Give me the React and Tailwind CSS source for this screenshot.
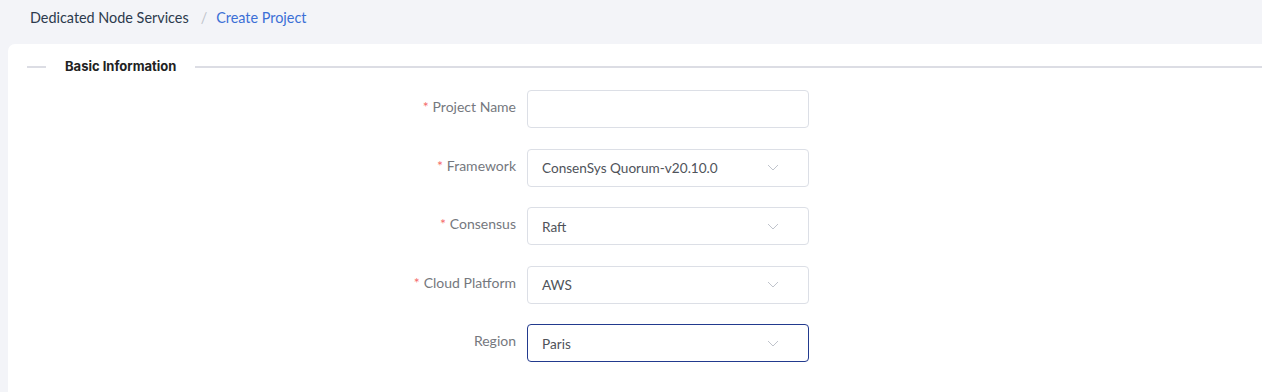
import React from "react";

const rows = [
  { label: "Project Name", req: true, value: null },
  { label: "Framework", req: true, value: "ConsenSys Quorum-v20.10.0" },
  { label: "Consensus", req: true, value: "Raft" },
  { label: "Cloud Platform", req: true, value: "AWS" },
  { label: "Region", req: false, value: "Paris", focus: true },
];

function Chevron() {
  return (
    <svg width="12" height="7" viewBox="0 0 12 7" className="mr-[29px]">
      <path d="M1 1 L6 6 L11 1" fill="none" stroke="#c0c4cc" strokeWidth="1" />
    </svg>
  );
}

export default function App() {
  return (
    <div
      className="w-[1262px] h-[392px] bg-[#f3f4f8] overflow-hidden"
      style={{ fontFamily: "Lato, 'Noto Sans', sans-serif" }}
    >
      <div className="h-[44px] flex items-start pt-[9px] pl-[30px] text-[14.4px] leading-[18px]">
        <span className="text-[#2c3a4d]">Dedicated Node Services</span>
        <span className="text-[#c0c4cc] ml-[12px] mr-[9px]">/</span>
        <span className="text-[#3b6fd6]">Create Project</span>
      </div>
      <div className="ml-[8px] bg-white rounded-tl-[7px] h-[348px] pt-[14px]">
        <div className="flex items-center h-[18px] pl-[19px]">
          <div className="w-[19px] h-[2px] bg-[#dcdde4]" />
          <span className="ml-[19px] mr-[19px] text-[13px] font-bold text-[#222] font-[Inter]">Basic Information</span>
          <div className="flex-1 h-[2px] bg-[#dcdde4]" />
        </div>
        <div className="flex flex-col gap-[20.5px] mt-[14px]">
          {rows.map((r) => (
            <div key={r.label} className="flex items-start">
              <div className="w-[508px] text-right text-[14px] leading-[18px] pt-[8px] text-[#75787e]">
                {r.req && <span className="text-[#f56c6c] mr-[4px]">*</span>}
                {r.label}
              </div>
              <div
                className={`ml-[11px] w-[282px] h-[38px] rounded-[4px] border flex items-center justify-between ${
                  r.focus ? "border-[#223a8e]" : "border-[#dcdfe6]"
                }`}
              >
                <span className="pl-[14px] pt-[2px] text-[13.6px] text-[#4f535a]">{r.value}</span>
                {r.value && <Chevron />}
              </div>
            </div>
          ))}
        </div>
      </div>
    </div>
  );
}
